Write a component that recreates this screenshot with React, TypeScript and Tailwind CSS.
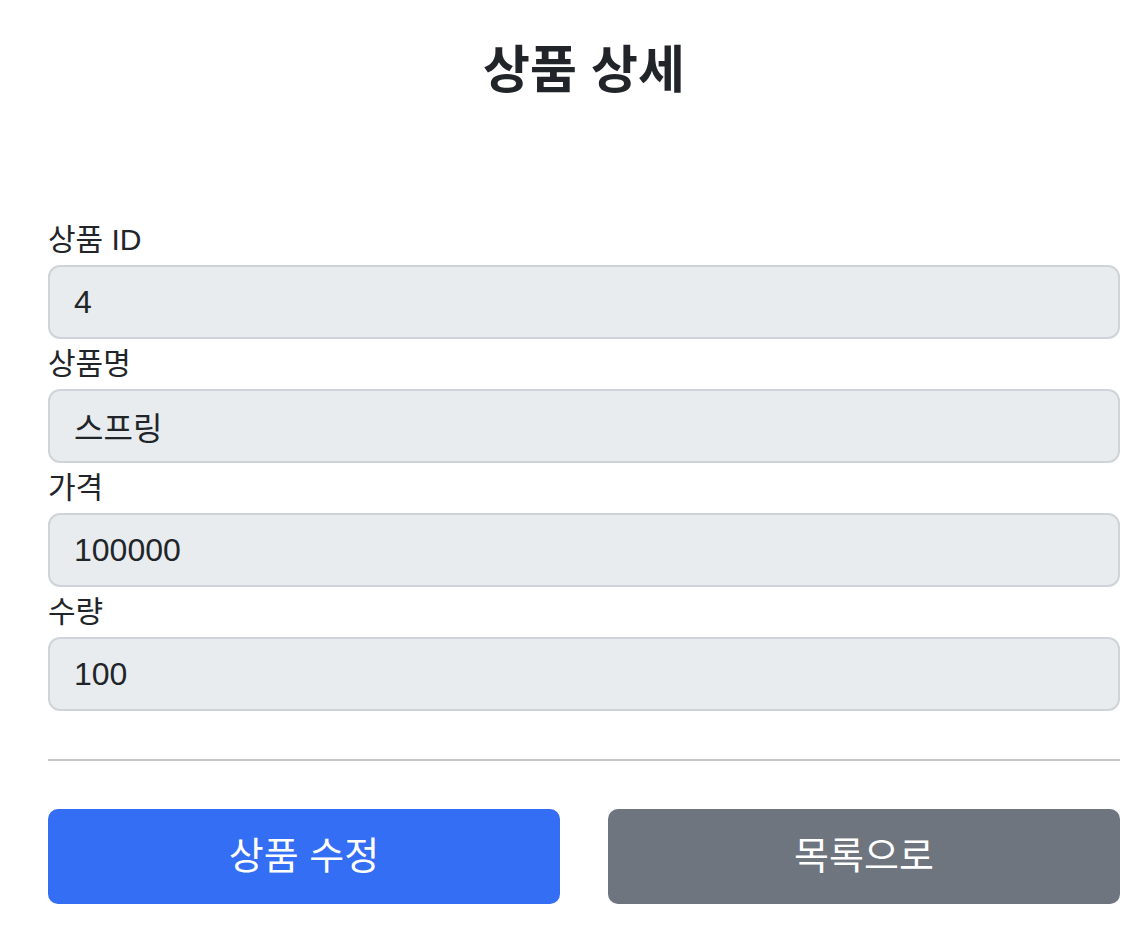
const fields = [
  { label: "상품 ID", value: "4" },
  { label: "상품명", value: "스프링" },
  { label: "가격", value: "100000" },
  { label: "수량", value: "100" },
];

export default function App() {
  return (
    <div
      className="min-h-screen bg-white pl-12 pr-4 text-[#212529]"
      style={{ fontFamily: '"Liberation Sans", "Noto Sans CJK KR", sans-serif' }}
    >
      <h2 className="pt-[40px] text-center text-[51px] font-bold leading-[62px]">상품 상세</h2>

      <form className="mt-[113px]">
        {fields.map((f) => (
          <div key={f.label}>
            <label className="block text-[30px] leading-[50px]">{f.label}</label>
            <input
              className="block h-[74px] w-full rounded-[12px] border-2 border-[#ced4da] bg-[#e9ecef] px-6 text-[32px] text-[#212529] outline-none"
              value={f.value}
              readOnly
            />
          </div>
        ))}
      </form>

      <hr className="mt-12 border-t-2 border-[#c8c9cb]" />

      <div className="mt-12 grid grid-cols-2 gap-12">
        <button className="h-[95px] rounded-[10px] bg-[#346ef4] text-[38px] text-white">상품 수정</button>
        <button className="h-[95px] rounded-[10px] bg-[#6f757e] text-[38px] text-white">목록으로</button>
      </div>
    </div>
  );
}
